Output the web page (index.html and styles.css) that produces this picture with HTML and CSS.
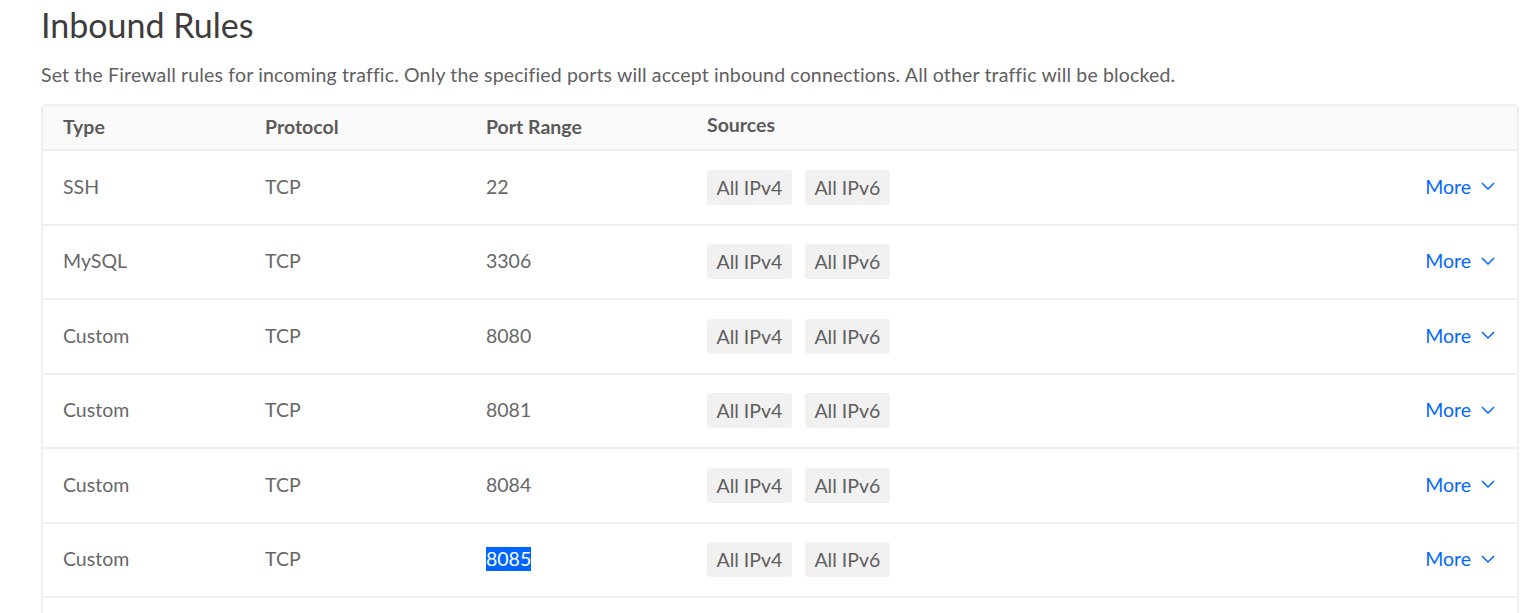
FILE: index.html
```html
<!DOCTYPE html>
<html lang="en">
<head>
<meta charset="utf-8">
<title>Inbound Rules</title>
<link rel="stylesheet" href="styles.css">
</head>
<body>
<main class="page">
  <h1 class="title">Inbound Rules</h1>
  <p class="desc">Set the Firewall rules for incoming traffic. Only the specified ports will accept inbound connections. All other traffic will be blocked.</p>
  <div class="table">
    <div class="row head">
      <div class="cell">Type</div>
      <div class="cell">Protocol</div>
      <div class="cell">Port Range</div>
      <div class="cell src-head">Sources</div>
      <div class="cell"></div>
    </div>
    <div class="row">
      <div class="cell">SSH</div><div class="cell">TCP</div><div class="cell">22</div>
      <div class="cell sources"><span class="pill">All IPv4</span><span class="pill">All IPv6</span></div>
      <div class="cell more">More <svg class="chev" viewBox="0 0 14 8" width="14" height="8"><path d="M1 1 L7 7 L13 1" fill="none" stroke="currentColor" stroke-width="1.5"/></svg></div>
    </div>
    <div class="row">
      <div class="cell">MySQL</div><div class="cell">TCP</div><div class="cell">3306</div>
      <div class="cell sources"><span class="pill">All IPv4</span><span class="pill">All IPv6</span></div>
      <div class="cell more">More <svg class="chev" viewBox="0 0 14 8" width="14" height="8"><path d="M1 1 L7 7 L13 1" fill="none" stroke="currentColor" stroke-width="1.5"/></svg></div>
    </div>
    <div class="row">
      <div class="cell">Custom</div><div class="cell">TCP</div><div class="cell">8080</div>
      <div class="cell sources"><span class="pill">All IPv4</span><span class="pill">All IPv6</span></div>
      <div class="cell more">More <svg class="chev" viewBox="0 0 14 8" width="14" height="8"><path d="M1 1 L7 7 L13 1" fill="none" stroke="currentColor" stroke-width="1.5"/></svg></div>
    </div>
    <div class="row">
      <div class="cell">Custom</div><div class="cell">TCP</div><div class="cell">8081</div>
      <div class="cell sources"><span class="pill">All IPv4</span><span class="pill">All IPv6</span></div>
      <div class="cell more">More <svg class="chev" viewBox="0 0 14 8" width="14" height="8"><path d="M1 1 L7 7 L13 1" fill="none" stroke="currentColor" stroke-width="1.5"/></svg></div>
    </div>
    <div class="row">
      <div class="cell">Custom</div><div class="cell">TCP</div><div class="cell">8084</div>
      <div class="cell sources"><span class="pill">All IPv4</span><span class="pill">All IPv6</span></div>
      <div class="cell more">More <svg class="chev" viewBox="0 0 14 8" width="14" height="8"><path d="M1 1 L7 7 L13 1" fill="none" stroke="currentColor" stroke-width="1.5"/></svg></div>
    </div>
    <div class="row">
      <div class="cell">Custom</div><div class="cell">TCP</div><div class="cell"><span class="selected">8085</span></div>
      <div class="cell sources"><span class="pill">All IPv4</span><span class="pill">All IPv6</span></div>
      <div class="cell more">More <svg class="chev" viewBox="0 0 14 8" width="14" height="8"><path d="M1 1 L7 7 L13 1" fill="none" stroke="currentColor" stroke-width="1.5"/></svg></div>
    </div>
    <div class="row empty"></div>
  </div>
</main>
</body>
</html>
```

FILE: styles.css
```css
* { box-sizing: border-box; }
html, body { margin: 0; padding: 0; background: #fff; }
body {
  font-family: Lato, "Open Sans", "Liberation Sans", sans-serif;
  color: #676767;
  overflow: hidden;
  height: 613px;
}
.page {
  padding: 0 20px 0 41px;
}
.title {
  margin: 0;
  padding-top: 6px;
  font-size: 34px;
  line-height: 38px;
  font-weight: 400;
  color: #3d3d3d;
}
.desc {
  margin: 19px 0 0;
  font-size: 19.5px;
  letter-spacing: 0.15px;
  line-height: 24px;
  color: #606060;
}
.table {
  margin-top: 17px;
  border: 2px solid #efefef;
  border-radius: 6px;
  overflow: hidden;
}
.row {
  display: grid;
  grid-template-columns: 202px 221px 221px 1fr auto;
  align-items: center;
  padding: 0 22px 0 20px;
  height: 74.5px;
  border-top: 2px solid #efefef;
  font-size: 19.5px;
}
.row > .cell { position: relative; top: -1px; }
.row.head {
  border-top: none;
  height: 43px;
  background: #fafafa;
  font-weight: 700;
  color: #5b5b5b;
  font-size: 19.5px;
}
.row.head .src-head { top: -3px; }
.row.empty { height: 40px; }
.sources { display: flex; gap: 13px; }
.row > .sources { top: 0; }
.pill {
  display: inline-block;
  background: #f1f1f1;
  border-radius: 3px;
  height: 35px;
  line-height: 35px;
  padding: 0 9.5px;
  color: #5f5f5f;
}
.selected {
  background: #0066ff;
  color: #fff;
  display: inline-block;
  line-height: 24px;
}
.more {
  color: #0069ff;
  display: flex;
  align-items: center;
  gap: 10px;
}
.chev { display: block; }
```
